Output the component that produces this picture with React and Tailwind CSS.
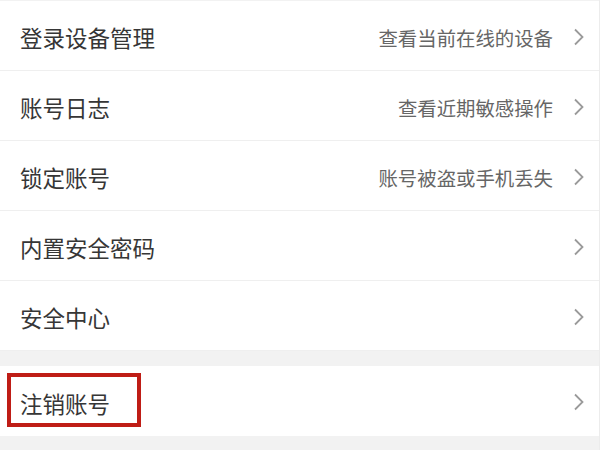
import React from "react";

const rows = [
	{ label: "登录设备管理", hint: "查看当前在线的设备" },
	{ label: "账号日志", hint: "查看近期敏感操作" },
	{ label: "锁定账号", hint: "账号被盗或手机丢失" },
	{ label: "内置安全密码", hint: "" },
	{ label: "安全中心", hint: "" },
];

const Chevron = () => (
	<svg width="12" height="18" viewBox="0 0 12 18" className="shrink-0 -mt-[2px]">
		<path d="M2 1.5 L9.5 9 L2 16.5" fill="none" stroke="#9a9a9a" strokeWidth="1.8" />
	</svg>
);

const Row = ({ label, hint, border = true, children }) => (
	<div
		className={
			"relative flex items-center h-[70px] bg-white pl-5 pr-[14px] pt-[4px] " +
			(border ? "border-b border-[#efefef]" : "")
		}>
		<span className="text-[22.5px] text-[#363636] leading-none">{label}</span>
		<div className="ml-auto flex items-center gap-[20px]">
			{hint && <span className="text-[19.4px] text-[#666666] leading-none">{hint}</span>}
			<Chevron />
		</div>
		{children}
	</div>
);

export default function App() {
	return (
		<div
			className="w-[600px] h-[450px] overflow-hidden bg-[#f2f2f2] pt-px border-r border-[#ececec]"
			style={{ fontFamily: '"Noto Sans CJK SC", "Noto Sans", sans-serif' }}>
			<div className="flex flex-col">
				{rows.map((r) => (
					<Row key={r.label} label={r.label} hint={r.hint} />
				))}
			</div>
			<div className="h-[15px]" />
			<Row label="注销账号" border={false}>
				<div className="absolute left-[7px] top-[7px] w-[134px] h-[54px] border-[4px] border-[#bf1d16]" />
			</Row>
		</div>
	);
}
